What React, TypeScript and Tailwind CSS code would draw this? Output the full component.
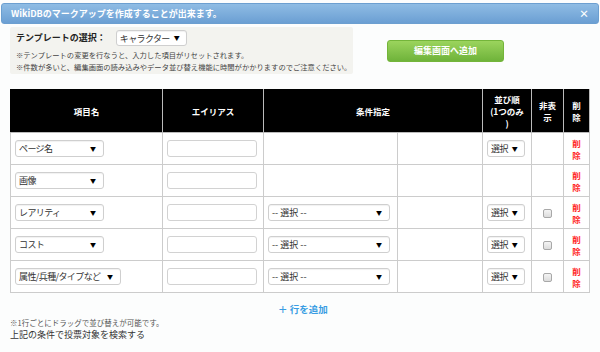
import React from 'react';

const FONT = { fontFamily: '"Noto Sans CJK JP", "Noto Sans", sans-serif' };

type Row = { item: string; itemW: string; cond: boolean; sort: boolean };

const ROWS: Row[] = [
  { item: 'ページ名', itemW: 'w-[89px]', cond: false, sort: true },
  { item: '画像', itemW: 'w-[89px]', cond: false, sort: false },
  { item: 'レアリティ', itemW: 'w-[89px]', cond: true, sort: true },
  { item: 'コスト', itemW: 'w-[89px]', cond: true, sort: true },
  { item: '属性/兵種/タイプなど', itemW: 'w-[106px]', cond: true, sort: true },
];

function Select({ label, className }: { label: string; className: string }) {
  return (
    <div
      className={`flex h-[17px] items-center justify-between rounded-[3px] border border-[#cfcfcf] bg-white pl-[3px] pr-[7px] text-[9px] tracking-[-0.6px] text-[#333] shadow-[inset_0_1px_1px_rgba(0,0,0,0.06)] ${className}`}
    >
      <span className="whitespace-nowrap leading-none">{label}</span>
      <span className="ml-[4px] text-[6px] leading-none tracking-normal text-black">▼</span>
    </div>
  );
}

function Input() {
  return <div className="h-[17px] w-[90px] rounded-[3px] border border-[#d2d2d2] bg-white" />;
}

export default function App() {
  return (
    <div className="h-[352px] w-[600px] overflow-hidden bg-[#fcfdfd]" style={FONT}>
      <div className="mx-[1px] mt-[3px] flex h-[21px] items-center justify-between rounded-[3px] border border-[#6c9fd0] bg-gradient-to-b from-[#8fbce4] to-[#6b9fd3] px-[9px]">
        <span className="text-[9px] font-bold text-white">WikiDBのマークアップを作成することが出来ます。</span>
        <span className="text-[10px] font-bold text-white">×</span>
      </div>

      <div className="flex items-center">
        <div className="ml-[10px] mt-[3px] h-[47px] w-[343px] rounded-[2px] bg-[#f3f3ef] px-[6px] pt-[3px]">
          <div className="flex items-center gap-[10px]">
            <span className="text-[9px] font-bold text-[#222]">テンプレートの選択：</span>
            <Select label="キャラクター" className="w-[71px] !h-[16px] border-[#c8c8c8] pr-[5px]" />
          </div>
          <div className="mt-[3px] text-[7.3px] leading-[12px] text-[#444]">
            <div>※テンプレートの変更を行なうと、入力した項目がリセットされます。</div>
            <div className="whitespace-nowrap">※件数が多いと、編集画面の読み込みやデータ並び替え機能に時間がかかりますのでご注意ください。</div>
          </div>
        </div>
        <button className="ml-[34px] mt-[4px] h-[22px] w-[117px] rounded-[3px] border border-[#74b53a] bg-gradient-to-b from-[#9bd45d] to-[#6fb33a] text-[9px] font-bold text-white">
          編集画面へ追加
        </button>
      </div>

      <table className="ml-[10px] mt-[15px] w-[579px] table-fixed border-collapse text-[9px]">
        <colgroup>
          <col className="w-[152px]" />
          <col className="w-[101px]" />
          <col className="w-[134px]" />
          <col className="w-[85px]" />
          <col className="w-[49px]" />
          <col className="w-[32px]" />
          <col className="w-[26px]" />
        </colgroup>
        <thead>
          <tr className="h-[43px] bg-black text-[8.5px] font-bold text-white">
            <th className="border border-[#bbb] border-t-black border-l-black">項目名</th>
            <th className="border border-[#bbb] border-t-black">エイリアス</th>
            <th colSpan={2} className="border border-[#bbb] border-t-black">条件指定</th>
            <th className="border border-[#bbb] border-t-black leading-[12px]">並び順<br />(1つのみ<br />)</th>
            <th className="border border-[#bbb] border-t-black leading-[12px]">非表<br />示</th>
            <th className="border border-[#bbb] border-t-black leading-[12px]">削<br />除</th>
          </tr>
        </thead>
        <tbody>
          {ROWS.map(r => (
            <tr key={r.item} className="h-[32px] bg-white">
              <td className="border border-[#cccccc] px-[4px]">
                <Select label={r.item} className={r.itemW} />
              </td>
              <td className="border border-[#cccccc] px-[4px]">
                <Input />
              </td>
              <td className="border border-[#cccccc] px-[4px]">
                {r.cond && <Select label="-- 選択 --" className="w-[122px] tracking-normal" />}
              </td>
              <td className="border border-[#cccccc]" />
              <td className="border border-[#cccccc] px-[4px]">
                {r.sort && <Select label="選択" className="w-[38px] pr-[5px]" />}
              </td>
              <td className="border border-[#cccccc] text-center">
                {r.cond && (
                  <span className="inline-block h-[9px] w-[9px] rounded-[2px] border border-[#a8a8a8] bg-gradient-to-b from-[#f4f4f4] to-[#dcdcdc] align-middle" />
                )}
              </td>
              <td className="border border-[#cccccc] text-center text-[8.5px] font-bold leading-[12px] text-[#ff2a2a]">
                削<br />除
              </td>
            </tr>
          ))}
        </tbody>
      </table>

      <div className="mt-[12px] pl-[278px] text-[9.5px] font-bold leading-none text-[#3a9de3]">＋ 行を追加</div>
      <div className="ml-[10px] mt-[2px] text-[7.5px] leading-[11px] text-[#555]">※1行ごとにドラッグで並び替えが可能です。</div>
      <div className="ml-[10px] mt-[1px] text-[9px] leading-[12px] text-[#333]">上記の条件で投票対象を検索する</div>
    </div>
  );
}
